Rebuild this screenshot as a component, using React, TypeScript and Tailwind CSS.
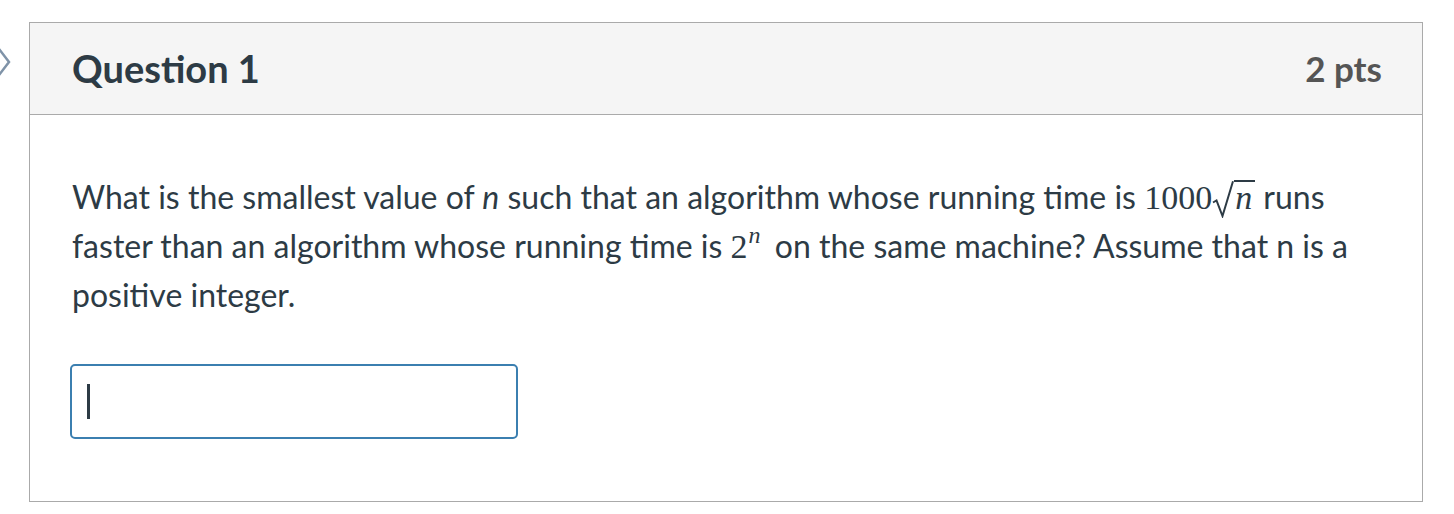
import React from "react";

const serif = "font-['Liberation_Serif','DejaVu_Serif',serif]";

function Sqrt({ children }: { children: React.ReactNode }) {
  return (
    <span className="whitespace-nowrap">
      <svg width="22" height="38" viewBox="0 0 22 38" className="inline-block align-[-9px]">
        <path d="M1 22.5 L4.5 20.5 L10.5 36 L21 1.2" fill="none" stroke="#2d3b45" strokeWidth="2" />
      </svg>
      <span className={`inline-block border-t-2 border-[#2d3b45] leading-[32px] ${serif} italic text-[34px] pl-[1px] pr-[3px]`}>
        {children}
      </span>
    </span>
  );
}

export default function App() {
  return (
    <div className="w-[1454px] h-[514px] bg-white font-['Lato','Noto_Sans',sans-serif] text-[#2d3b45] overflow-hidden">
      <div className="flex items-start pt-[22px]">
        <div className="w-[29px] flex pt-[25px] ml-[-5px] mr-[5px]">
          <svg width="18" height="30" viewBox="0 0 18 30">
            <path d="M4 2 L14 15 L4 28" fill="none" stroke="#7f93a8" strokeWidth="2.5" />
          </svg>
        </div>
        <div className="w-[1394px] h-[480px] border border-[#aaaaaa] flex flex-col">
          <div className="h-[92px] shrink-0 bg-[#f5f5f5] border-b border-[#aaaaaa] flex items-center justify-between pl-[42px] pr-[40px]">
            <h2 className="text-[38px] font-bold">Question 1</h2>
            <div className="text-[35px] font-bold text-[#555555]">2 pts</div>
          </div>
          <div className="pl-[42px] pr-[40px] pt-[58px]">
            <p className="text-[32px] leading-[48px]">
              What is the smallest value of <em>n</em> such that an algorithm whose running time is{" "}
              <span className={`${serif} text-[34px]`}>1000</span>
              <Sqrt>n</Sqrt> runs faster than an algorithm whose running time is{" "}
              <span className={`${serif} text-[34px]`}>
                2<span className="italic text-[24px] leading-none relative -top-[15px] ml-[1px] mr-[6px]">n</span>
              </span>{" "}
              on the same machine? Assume that n is a positive integer.
            </p>
            <div className="mt-[45px] ml-[-2px] w-[448px] h-[75px] border-2 border-[#3b7fb0] rounded-[5px] flex items-center pl-[15px]">
              <div className="w-[3px] h-[35px] bg-[#2d3b45]" />
            </div>
          </div>
        </div>
      </div>
    </div>
  );
}
